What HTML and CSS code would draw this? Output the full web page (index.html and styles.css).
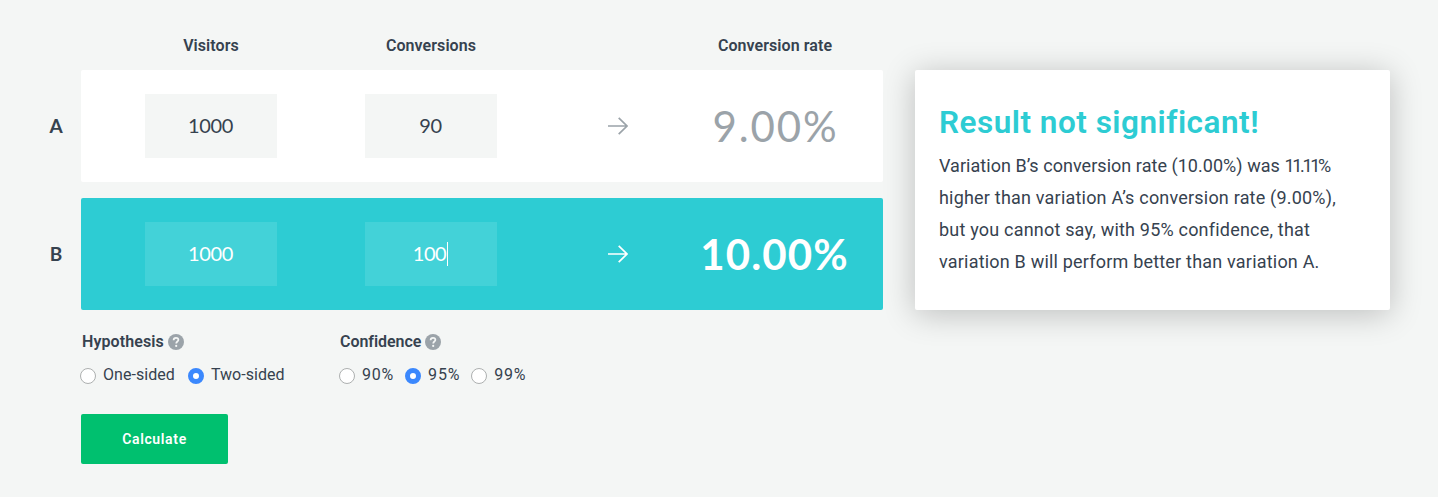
FILE: index.html
```html
<!DOCTYPE html>
<html lang="en">
<head>
<meta charset="utf-8">
<title>A/B test calculator</title>
<link rel="stylesheet" href="styles.css">
</head>
<body>
<main class="calculator">
  <form class="inputs">
    <div class="cols head">
      <span>Visitors</span><span>Conversions</span><span></span><span>Conversion rate</span>
    </div>
    <div class="row">
      <b class="letter">A</b>
      <div class="cols panel">
        <span class="field">1000</span><span class="field">90</span>
        <svg class="arrow" viewBox="0 0 20 18"><path d="M0 9H19M10.7 .9L19 9L10.7 17.1"/></svg>
        <span class="rate">9.00%</span>
      </div>
    </div>
    <div class="row">
      <b class="letter">B</b>
      <div class="cols panel active">
        <span class="field">1000</span><span class="field">100<i class="caret"></i></span>
        <svg class="arrow" viewBox="0 0 20 18"><path d="M0 9H19M10.7 .9L19 9L10.7 17.1"/></svg>
        <span class="rate">10.00%</span>
      </div>
    </div>
    <div class="settings">
      <section class="setting">
        <h3><span class="hyp">Hypothesis</span><svg class="help" viewBox="0 0 16 16"><circle cx="8" cy="8" r="8"/><path d="M5.6 6.3C5.6 4.7 6.6 3.9 8 3.9S10.4 4.8 10.4 6C10.4 7.5 8.2 7.6 8.2 9.4"/><circle class="dot" cx="8.2" cy="11.9" r="1.1"/></svg></h3>
        <div class="options sides">
          <label><i class="radio"></i><span>One-sided</span></label>
          <label><i class="radio on"></i><span>Two-sided</span></label>
        </div>
      </section>
      <section class="setting">
        <h3><span class="conf">Confidence</span><svg class="help" viewBox="0 0 16 16"><circle cx="8" cy="8" r="8"/><path d="M5.6 6.3C5.6 4.7 6.6 3.9 8 3.9S10.4 4.8 10.4 6C10.4 7.5 8.2 7.6 8.2 9.4"/><circle class="dot" cx="8.2" cy="11.9" r="1.1"/></svg></h3>
        <div class="options levels">
          <label><i class="radio"></i><span>90%</span></label>
          <label><i class="radio on"></i><span>95%</span></label>
          <label><i class="radio"></i><span>99%</span></label>
        </div>
      </section>
    </div>
    <button class="submit" type="button">Calculate</button>
  </form>
  <aside class="result">
    <h2>Result not significant!</h2>
    <p><span class="lead">Variation B’s conversion rate (10.00%) was </span><span class="lift">11.11%</span><br>higher than variation A’s conversion rate (9.00%),<br>but you cannot say, with 95% confidence, that<br>variation B will perform better than variation A.</p>
  </aside>
</main>
</body>
</html>
```
FILE: styles.css
```css
* { box-sizing: border-box; }
body { margin: 0; background: #f4f6f5; color: #36424f; font-family: Roboto, "Liberation Sans", sans-serif; }
.calculator { display: flex; align-items: flex-start; height: 497px; padding: 30px 48px 0 31px; overflow: hidden; }
.inputs { width: 852px; flex: none; }
.cols { display: grid; grid-template-columns: 220px 220px 154px 160px; padding: 0 28px 0 20px; justify-items: center; align-items: center; }
.head { margin-left: 50px; height: 40px; align-items: start; font-size: 16px; line-height: 32px; font-weight: 600; letter-spacing: .07px; white-space: nowrap; }
.row { display: flex; align-items: center; margin-bottom: 16px; }
.letter { width: 50px; padding-bottom: 1px; text-align: center; font: 700 19px/1 Lato, sans-serif; }
.panel { width: 802px; height: 112px; background: #fff; border-radius: 2px; }
.field { display: flex; align-items: center; justify-content: center; width: 132px; height: 64px; padding: 0 1px 2px 0; background: #f4f6f5; font: 400 20px/1 Lato, sans-serif; letter-spacing: -.4px; }
.arrow { width: 20px; height: 18px; fill: none; stroke: #9ba3a9; stroke-width: 1.7; }
.rate { font: 400 42px/1 Lato, sans-serif; letter-spacing: 1.9px; margin-right: -1px; color: #9ba3a9; white-space: nowrap; }
.active { background: #2dccd3; color: #fff; }
.active .field { background: #43d2d8; }
.active .arrow { stroke: #fff; }
.active .rate { color: #fff; font-weight: 700; letter-spacing: 1.1px; margin-right: 1px; }
.caret { width: 1px; height: 24px; margin: 1px 0 0 1px; background: #fff; }
.settings { display: flex; margin-left: 49px; padding-top: 5px; }
.setting { width: 259px; }
h3 { display: flex; align-items: center; gap: 4px; margin: 0 0 0 1px; font-size: 16px; line-height: 22px; font-weight: 600; }
.hyp { padding-left: 1px; letter-spacing: .1px; }
.conf { width: 81px; letter-spacing: -.05px; }
.help { width: 16px; height: 16px; fill: #9ba3a9; }
.help path { fill: none; stroke: #f4f6f5; stroke-width: 1.7; }
.help .dot { fill: #f4f6f5; }
.options { display: flex; gap: 12px; margin-top: 11px; font-size: 16px; line-height: 22px; white-space: nowrap; }
.options label { display: flex; align-items: center; gap: 7px; }
.sides { letter-spacing: .05px; gap: 13px; }
.levels { letter-spacing: .8px; gap: 11px; }
.radio { width: 16px; height: 16px; margin-top: 2px; border: 1px solid #adb0b0; border-radius: 50%; background: #fff; }
.radio.on { border: 5px solid #3b88fd; }
.submit { display: block; width: 147px; height: 50px; margin: 28px 0 0 50px; padding: 0; border: 0; border-radius: 2px; background: #00c06f; color: #fff; font: 600 14px/50px Roboto, sans-serif; letter-spacing: .65px; }
.result { width: 475px; height: 240px; margin: 40px 0 0 32px; padding: 36px 24px; background: #fff; border-radius: 2px; box-shadow: 0 4px 32px rgba(0, 0, 0, .23); white-space: nowrap; }
h2 { margin: 0; color: #2dccd3; font-size: 31.5px; line-height: 34px; font-weight: 600; letter-spacing: .5px; }
p { margin: 10px 0 0; font-size: 18px; line-height: 32px; letter-spacing: .2px; }
.lead { letter-spacing: .04px; }
.lift { letter-spacing: -2.3px; }
```
